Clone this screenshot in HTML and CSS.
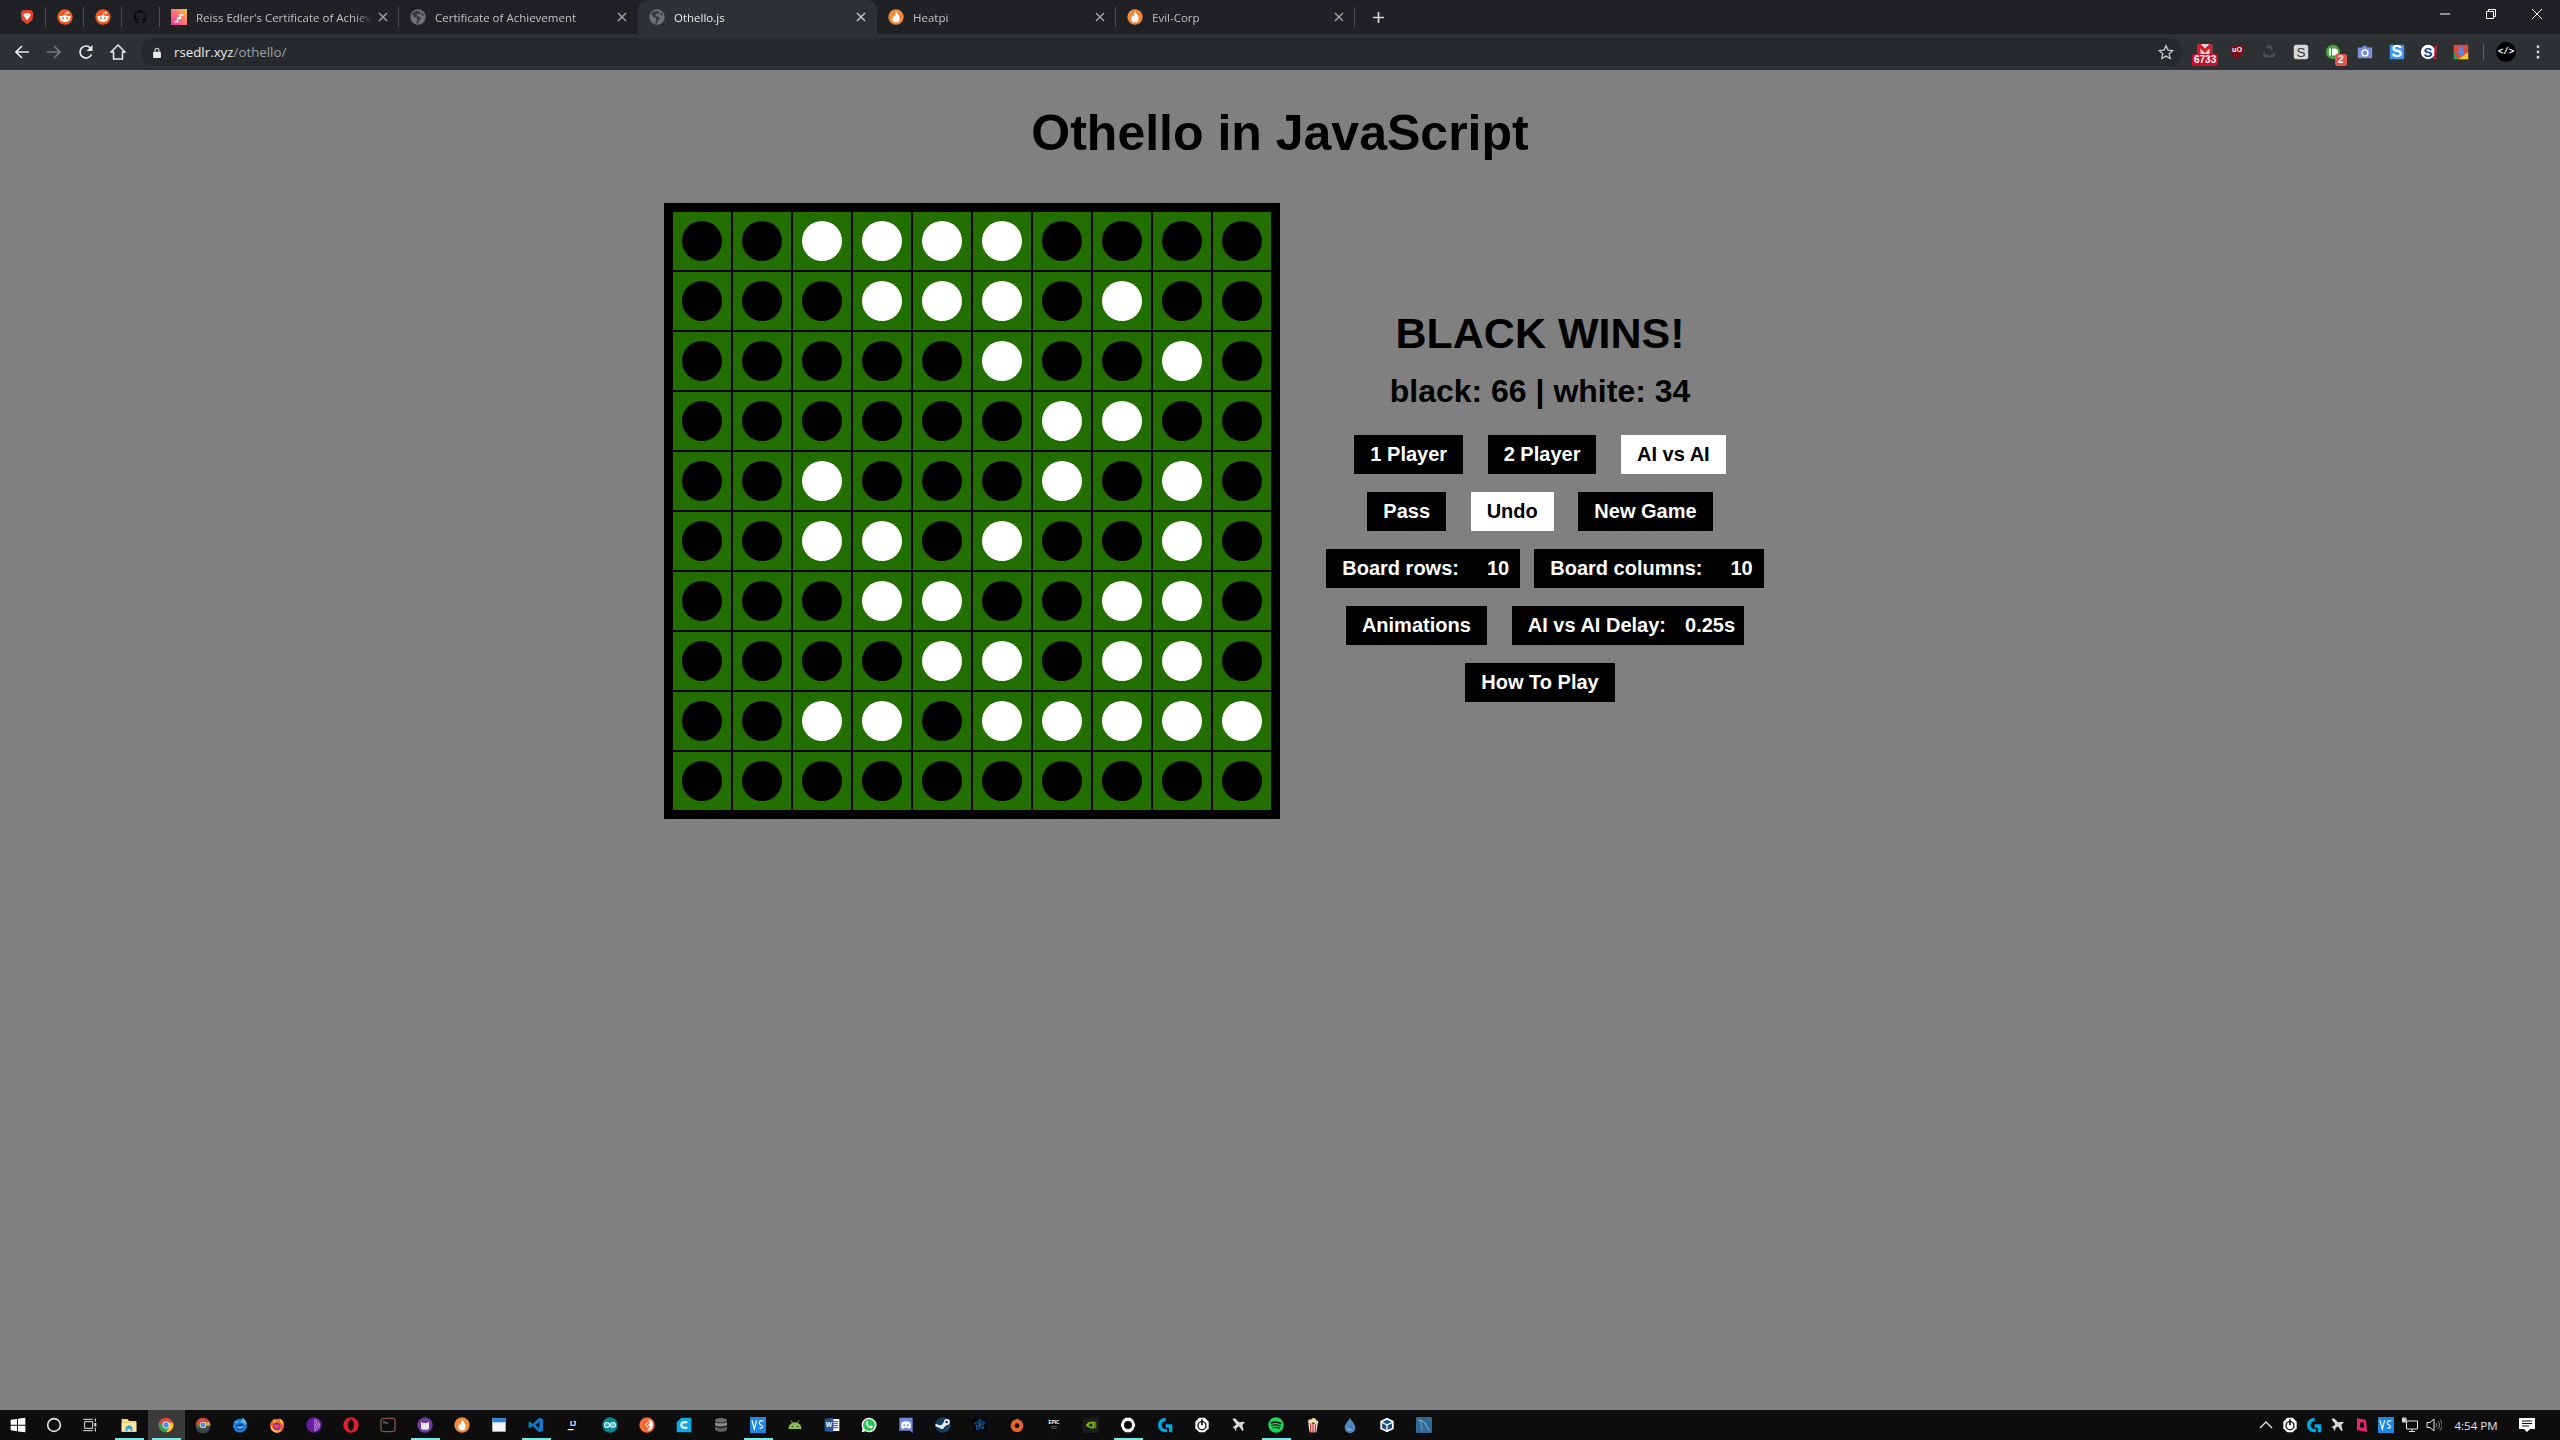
FILE: index.html
```html
<!DOCTYPE html>
<html lang="en">
<head>
<meta charset="utf-8">
<title>Othello.js</title>
<link rel="stylesheet" href="styles.css">
</head>
<body>
<svg class="defs" aria-hidden="true">
<symbol id="flame" viewBox="0 0 24 24"><circle cx="12" cy="12" r="11.5" fill="#f0893a"/><path d="M12.5 3.5c.5 3.5 5 6 5 11a5.5 5.5 0 0 1-11 0c0-2.500 1.300-4 2.300-5.200.2 1.400.7 2.200 1.500 2.700.2-3 .6-5.700 2.200-8.500z" fill="#fff"/></symbol>
<symbol id="globe" viewBox="0 0 24 24"><circle cx="12" cy="12" r="11.500" fill="#6f7276"/><path d="M11 2.500 6 4 3 8l3 4 4 1 1 4-2 4 3 1 2-5 3-3-4-3-3-1 1-3 4 1 1-4zM18 5l3 4-2 2-2-3z" fill="#3a3d40"/></symbol>
<symbol id="reddit" viewBox="0 0 24 24"><circle cx="12" cy="12" r="11.500" fill="#f1571f"/><ellipse cx="12" cy="14.500" rx="7.500" ry="5" fill="#fff"/><circle cx="5" cy="12" r="1.800" fill="#fff"/><circle cx="19" cy="12" r="1.800" fill="#fff"/><circle cx="16.500" cy="5.500" r="1.500" fill="#fff"/><path d="M12 10l1-4.500 3.500.5" fill="none" stroke="#fff"/><circle cx="9" cy="13.500" r="1.400" fill="#f1571f"/><circle cx="15" cy="13.500" r="1.400" fill="#f1571f"/></symbol>
<symbol id="brave" viewBox="0 0 24 24"><path d="M6 1.500h12l3.500 4-1.500 11-8 6.500-8-6.500-1.500-11z" fill="#e8432c"/><path d="M8 7l4-1 4 1 1.500 2-2.500 4-3 4-3-4-2.500-4z" fill="#fff"/><path d="M10 10h1.200M12.800 10H14" stroke="#e8432c" stroke-width="1.200"/></symbol>
<symbol id="github" viewBox="0 0 24 24"><path d="M12 1a11 11 0 0 0-3.500 21.400v-3.600c-3 .6-3.700-1.400-3.700-1.400-.5-1.200-1.200-1.600-1.200-1.600-1-.7.1-.7.1-.7 1.100.1 1.700 1.100 1.700 1.100 1 1.700 2.600 1.200 3.200.9.100-.7.400-1.200.700-1.500-2.400-.3-5-1.200-5-5.400 0-1.200.4-2.200 1.100-2.900-.1-.3-.5-1.400.1-2.900 0 0 .9-.3 3 1.100a10 10 0 0 1 5.400 0c2.100-1.400 3-1.100 3-1.100.6 1.500.2 2.600.1 2.900.7.7 1.100 1.700 1.100 2.900 0 4.200-2.600 5.100-5 5.400.4.300.7 1 .7 2v3.900A11 11 0 0 0 12 1z" fill="#0a0a0a"/></symbol>
<symbol id="stairs" viewBox="0 0 24 24"><defs><linearGradient id="pk" x1="0" y1="1" x2="1" y2="0"><stop offset="0" stop-color="#f22bb0"/><stop offset="1" stop-color="#ffc23a"/></linearGradient></defs><rect width="24" height="24" fill="url(#pk)"/><path d="M5 19h5v-5h4V9h5" fill="none" stroke="#fff" stroke-width="2.200"/></symbol>
<symbol id="x" viewBox="0 0 10 10"><path d="M1 1l8 8M9 1l-8 8" stroke="currentColor" stroke-width="1.500" fill="none"/></symbol>
<symbol id="windows" viewBox="0 0 24 24"><path d="M1 4.200 10.500 3v8.500H1zM12 2.800 23 1v10.500H12zM1 13h9.500v8.500L1 20zM12 13h11v10l-11-1.400z" fill="#fff"/></symbol>
<symbol id="chrome" viewBox="0 0 24 24"><circle cx="12" cy="12" r="11" fill="#dd4b3e"/><path d="M12 23A11 11 0 0 0 22.500 8.500H12l3.500 5.500z" fill="#f7c52d"/><path d="M1.800 7.500A11 11 0 0 0 12 23l4.500-7.500H8z" fill="#2f9f4d"/><circle cx="12" cy="12" r="5.200" fill="#fff"/><circle cx="12" cy="12" r="4" fill="#4a8bf0"/></symbol>
<symbol id="canary" viewBox="0 0 24 24"><circle cx="12" cy="12" r="11" fill="#d8483a"/><path d="M1 12h22v2a11 11 0 0 1-22 0z" fill="#3f4448"/><path d="M12 8h10.500l.5 5H16z" fill="#d7a928"/><path d="M3 7 8 15l-5 1z" fill="#3e8a4c"/><circle cx="12" cy="12" r="5" fill="#ddd"/><circle cx="12" cy="12" r="3.600" fill="#5c87c7"/></symbol>
<symbol id="ffdev" viewBox="0 0 24 24"><circle cx="12" cy="13" r="10.500" fill="#1e7fd8"/><path d="M3 6c2 2 3 3 5 3 2-3 6-3 8-2-1-2-1-4 0-6 3 2 6 5 6 11-4-3-9-5-19-6z" fill="#5cc1ef"/><circle cx="12" cy="14.500" r="5" fill="#0f4fb8"/><path d="M8 13c2 2 6 3 9 0-1 5-9 6-9 0z" fill="#bfe6fb"/></symbol>
<symbol id="firefox" viewBox="0 0 24 24"><circle cx="12" cy="13" r="10.500" fill="#f46a2a"/><path d="M22 12a10 10 0 0 0-7-10c2 2 2 5 1 6 3 1 6 3 6 4zM3 18A10.500 10.500 0 0 0 20 20C14 22 7 20 3 13z" fill="#ffbd3a"/><circle cx="11.500" cy="14" r="5.500" fill="#6a2bb7"/><path d="M7 12c3-2 7-1 9 1-1 6-10 6-9-1z" fill="#f03f5f"/><path d="M7 3c1 2 2 3 4 3L7 9z" fill="#ffd43a"/></symbol>
<symbol id="tor" viewBox="0 0 24 24"><circle cx="12" cy="12" r="11.500" fill="#6a1ba3"/><g fill="none" stroke="#d9b5ef" stroke-width="1.400"><path d="M12 4a8 8 0 0 1 0 16"/><path d="M12 7a5 5 0 0 1 0 10"/><path d="M12 10a2 2 0 0 1 0 4"/></g></symbol>
<symbol id="opera" viewBox="0 0 24 24"><circle cx="12" cy="12" r="11.500" fill="#e0202c"/><ellipse cx="12" cy="12" rx="4.500" ry="8.500" fill="#111"/></symbol>
<symbol id="terminal" viewBox="0 0 24 24"><rect x="1.500" y="2" width="21" height="20" rx="2.500" fill="#0b0b12" stroke="#b8705a" stroke-width="1.400"/><path d="M5 6l2 1.500L5 9" stroke="#fff" stroke-width="1" fill="none"/><path d="M8 9h4" stroke="#fff"/></symbol>
<symbol id="cat" viewBox="0 0 24 24"><circle cx="12" cy="12" r="11.500" fill="#6a3e9e"/><path d="M6 7l3 2h6l3-2v9a3 3 0 0 1-3 3H9a3 3 0 0 1-3-3z" fill="#e9e4f2"/></symbol>
<symbol id="calendar" viewBox="0 0 24 24"><rect x="2" y="2" width="20" height="20" fill="#f3f5f7"/><rect x="2" y="2" width="20" height="6" fill="#1e7fe5"/></symbol>
<symbol id="vscode" viewBox="0 0 24 24"><path d="M17 1 22.500 3.500v17L17 23 7 13.500 2.800 17 1 16V8l1.800-1L7 10.500zM17 7l-6 5 6 5z" fill="#0f7ccc"/></symbol>
<symbol id="arduino" viewBox="0 0 24 24"><circle cx="12" cy="12" r="11.500" fill="#05888f"/><g fill="none" stroke="#dff" stroke-width="1.800"><circle cx="7.500" cy="12" r="3.600"/><circle cx="16.500" cy="12" r="3.600"/></g><path d="M6 12h3M15 12h3M16.500 10.500v3" stroke="#dff"/></symbol>
<symbol id="gitk" viewBox="0 0 24 24"><circle cx="12" cy="12" r="11.500" fill="#f4622d"/><circle cx="12" cy="12" r="9" fill="#fff"/><path d="M12 3a9 9 0 0 0 0 18l3-3-6-6 7-7z" fill="#f4622d"/><path d="M16 8l-4 4 4 4" fill="none" stroke="#f4622d" stroke-width="2"/></symbol>
<symbol id="cyanc" viewBox="0 0 24 24"><path d="M8 1h15v22H1V8z" fill="#0ea8e2"/><path d="M17 8h-5a4 4 0 0 0 0 8h5" fill="none" stroke="#fff" stroke-width="3"/></symbol>
<symbol id="db" viewBox="0 0 24 24"><g fill="#6d6f70"><ellipse cx="12" cy="5" rx="9" ry="3.500"/><path d="M3 7c2 3 16 3 18 0v5c-2 3-16 3-18 0z" fill="#8a8c8d"/><path d="M3 14c2 3 16 3 18 0v5c-2 4-16 4-18 0z" fill="#5d5f60"/></g></symbol>
<symbol id="vs" viewBox="0 0 24 24"><rect width="24" height="24" fill="#1e88e5"/><path d="M3 5l3.500 13L10 5M20 6c-6-2-8 4-4 5.500 4 1.500 4 6-2 5" fill="none" stroke="#fff" stroke-width="1.700"/></symbol>
<symbol id="android" viewBox="0 0 24 24"><path d="M2 18a10 10 0 0 1 20 0z" fill="#8bb84f"/><path d="M6 5l3 5M18 5l-3 5" stroke="#8bb84f" stroke-width="1.400"/><circle cx="8" cy="14" r="1" fill="#111"/><circle cx="16" cy="14" r="1" fill="#111"/></symbol>
<symbol id="whatsapp" viewBox="0 0 24 24"><path d="M12 1a11 11 0 0 0-9.500 16.500L1 23l5.700-1.500A11 11 0 1 0 12 1z" fill="#fff"/><circle cx="12" cy="12" r="9" fill="#29c453"/><path d="M8.500 6.500c-2 1.500-1.500 4 .5 6.500 2.500 3 5.500 4.500 7.500 3.500 1.200-.6 1.500-2 1-2.500l-2.500-1.200-1 1.200c-1.500-.3-3.500-2.200-4.200-3.800l1-1.200-1-2.500z" fill="#fff"/></symbol>
<symbol id="discord" viewBox="0 0 24 24"><path d="M2 1h20v23l-4-3.500H2z" fill="#7289da"/><path d="M6 8c4-2 8-2 12 0 1.500 3 1.500 6 1 8-1 1-2.500 1.500-3.500 1.500l-1-1.500h-5L8.500 17.500C7.500 17.500 6 17 5 16c-.5-2-.5-5 1-8z" fill="#fff"/><circle cx="9.500" cy="12.500" r="1.500" fill="#7289da"/><circle cx="14.500" cy="12.500" r="1.500" fill="#7289da"/></symbol>
<symbol id="steam" viewBox="0 0 24 24"><circle cx="12" cy="12" r="11.500" fill="#133f63"/><path d="M.8 14l7 3a3.500 3.500 0 0 0 6-2l4-3a4.500 4.500 0 1 0-4.500-4.500L10 12a3.500 3.500 0 0 0-2.500.5L.6 10z" fill="#eee"/><circle cx="17.500" cy="7.500" r="2" fill="#133f63"/></symbol>
<symbol id="battle" viewBox="0 0 24 24"><rect x="1" y="1" width="22" height="22" rx="5" fill="#02060f"/><path d="M12 3c1 3 2 4 7 5-3 3-3 5-2 9-3-1-6-1-10 2 1-4 0-7-3-10 4 0 6-2 8-6zM9 9l7 6M7 15l9-7M12 6l-1 11" fill="none" stroke="#0b8fe0" stroke-width="1.200"/></symbol>
<symbol id="origin" viewBox="0 0 24 24"><circle cx="12" cy="13" r="9.500" fill="#e8632a"/><path d="M14 1l-1 4h-3z" fill="#e8632a"/><path d="M11 23l1-4h3z" fill="#e8632a"/><circle cx="12" cy="13" r="3.500" fill="#0d0d0d"/></symbol>
<symbol id="nvidia" viewBox="0 0 24 24"><rect width="24" height="24" fill="#1a1a1a"/><path d="M4 12c3-5 9-6 13-5v10c-5 1-10-1-13-5zM8 12c2-2 5-3 6-2v5c-2 0-4-1-6-3z" fill="#76b900" fill-rule="evenodd"/><path d="M17 7h3v10h-3" fill="#5a8a08"/></symbol>
<symbol id="ring" viewBox="0 0 24 24"><path d="M8 1h8l4 4 3 7-3 7-4 4H8l-4-4-3-7 3-7z" fill="#fff"/><circle cx="12" cy="12" r="6" fill="#0d0d0d"/></symbol>
<symbol id="logi" viewBox="0 0 24 24"><path d="M13 1a11 11 0 0 0-1 22 11 11 0 0 0 3-.4v-5a6 6 0 1 1-2-11.600z" fill="#00a8e0"/><path d="M13 11h10v12h-5v-7h-5z" fill="#00a8e0"/></symbol>
<symbol id="power" viewBox="0 0 24 24"><path d="M8 1h8l6 6v10l-6 6H8l-6-6V7z" fill="#fff"/><circle cx="12" cy="13" r="6" fill="none" stroke="#0d0d0d" stroke-width="2"/><path d="M12 3.500v9" stroke="#0d0d0d" stroke-width="2.500"/></symbol>
<symbol id="plane" viewBox="0 0 24 24"><path d="M2 3l4-1 6 6 6-1 3 1-4 4 2 8-2 1-5-7-4 3v3l-1 1-2-4-3-2 3-1 3-3z" fill="#d8d8d8"/></symbol>
<symbol id="spotify" viewBox="0 0 24 24"><circle cx="12" cy="12" r="11.500" fill="#1ed760"/><g fill="none" stroke="#111" stroke-linecap="round"><path d="M5 8.500c5-1.400 10-1 14.500 1.300" stroke-width="2.400"/><path d="M6 12.500c4-1.100 8.500-.7 12 1.200" stroke-width="2"/><path d="M7 16c3.500-.8 7-.5 10 1" stroke-width="1.600"/></g></symbol>
<symbol id="popcorn" viewBox="0 0 24 24"><path d="M5 10h14l-2 13H7z" fill="#fff"/><path d="M8 10l1 13M12 10v13M16 10l-1 13" stroke="#d6312d" stroke-width="2"/><g fill="#f5e1b0"><circle cx="8" cy="7" r="3.500"/><circle cx="13" cy="5" r="3.500"/><circle cx="17" cy="8" r="3"/></g></symbol>
<symbol id="drop" viewBox="0 0 24 24"><path d="M12 1c3 6 8 9 8 15a8 8 0 0 1-16 0c0-6 5-9 8-15z" fill="#4f88b8"/><path d="M8 15c1 3 4 4 7 3-1 3-8 3-7-3z" fill="#9fc4dd"/></symbol>
<symbol id="cube" viewBox="0 0 24 24"><path d="M12 1l10 5v12l-10 5-10-5V6z" fill="#fff"/><path d="M12 4l7 3.500-7 3.500-7-3.500zM4.500 9.500l6.500 3v7l-6.500-3zM19.500 9.500l-6.500 3v7l6.500-3z" fill="#1c4f87"/></symbol>
<symbol id="mysql" viewBox="0 0 24 24"><rect width="24" height="24" rx="2" fill="#2f6b94"/><path d="M3 5c7-1 11 4 13 9 1 3 3 5 5 6" fill="none" stroke="#a9cadf" stroke-width="1.300"/><path d="M8 6c-1 4 0 10 2 14" fill="none" stroke="#a9cadf"/></symbol>
</svg>

<header class="chrome">
  <div class="tabstrip">
    <div class="pinned"><svg class="fav"><use href="#brave"/></svg></div>
    <div class="pinned"><svg class="fav"><use href="#reddit"/></svg></div>
    <div class="pinned"><svg class="fav"><use href="#reddit"/></svg></div>
    <div class="pinned"><svg class="fav"><use href="#github"/></svg></div>
    <div class="tab sep"><svg class="fav"><use href="#stairs"/></svg><span class="tab-title">Reiss Edler's Certificate of Achievement</span><svg class="close"><use href="#x"/></svg></div>
    <div class="tab"><svg class="fav"><use href="#globe"/></svg><span class="tab-title">Certificate of Achievement</span><svg class="close"><use href="#x"/></svg></div>
    <div class="tab active"><svg class="fav"><use href="#globe"/></svg><span class="tab-title">Othello.js</span><svg class="close"><use href="#x"/></svg></div>
    <div class="tab sep"><svg class="fav"><use href="#flame"/></svg><span class="tab-title">Heatpi</span><svg class="close"><use href="#x"/></svg></div>
    <div class="tab sep"><svg class="fav"><use href="#flame"/></svg><span class="tab-title">Evil-Corp</span><svg class="close"><use href="#x"/></svg></div>
    <div class="newtab"><svg viewBox="0 0 14 14"><path d="M7 1v12M1 7h12" stroke="#d6d8da" stroke-width="1.800"/></svg></div>
    <div class="winctl">
      <div class="winbtn"><svg viewBox="0 0 10 10"><path d="M0 5h10" stroke="#fff"/></svg></div>
      <div class="winbtn"><svg viewBox="0 0 10 10"><path d="M.5 2.500h7v7h-7zM2.500 2.500v-2h7v7h-2" fill="none" stroke="#fff"/></svg></div>
      <div class="winbtn"><svg viewBox="0 0 10 10"><path d="M0 0l10 10M10 0 0 10" stroke="#fff"/></svg></div>
    </div>
  </div>
  <div class="toolbar">
    <div class="navbtn"><svg viewBox="0 0 16 16"><path d="M15 8H2M8 2 2 8l6 6" fill="none" stroke="#e8eaed" stroke-width="1.700"/></svg></div>
    <div class="navbtn"><svg viewBox="0 0 16 16"><path d="M1 8h13M8 2l6 6-6 6" fill="none" stroke="#75787b" stroke-width="1.700"/></svg></div>
    <div class="navbtn"><svg viewBox="0 0 16 16"><path d="M13.500 10.500A6 6 0 1 1 12.500 4" fill="none" stroke="#e8eaed" stroke-width="1.700"/><path d="M14.500 1v6h-6z" fill="#e8eaed"/></svg></div>
    <div class="navbtn"><svg viewBox="0 0 16 16"><path d="M8 1 1 8h2.500v7h9V8H15z" fill="none" stroke="#e8eaed" stroke-width="1.500"/></svg></div>
    <div class="omnibox">
      <svg class="lock" viewBox="0 0 10 14"><path d="M2.500 6V4a2.500 2.500 0 0 1 5 0v2" fill="none" stroke="#e8eaed" stroke-width="1.300"/><rect y="6" width="10" height="8" rx="1" fill="#e8eaed"/></svg>
      <span class="url"><span class="host">rsedlr.xyz</span>/othello/</span>
      <svg class="star" viewBox="0 0 24 24"><path d="M12 2.500l3 6.600 7 .8-5.200 4.800 1.400 7L12 18.200 5.800 21.700l1.400-7L2 9.900l7-.8z" fill="none" stroke="#c4c6c9" stroke-width="2"/></svg>
    </div>
    <div class="ext"><svg viewBox="0 0 20 20" class="ext-ic ext-mail"><rect x="2" y="0" width="16" height="13" fill="#d8d8d8"/><path d="M2 0h3l5 5 5-5h3v13h-3V5l-5 5-5-5v8H2z" fill="#cf2027"/></svg><span class="badge badge-red">6733</span></div>
    <div class="ext"><svg viewBox="0 0 20 20" class="ext-ic"><path d="M3 2.500h14V12l-7 6-7-6z" fill="#7d1017"/><text x="10" y="10.500" class="svg-t ub-t">uO</text></svg></div>
    <div class="ext"><svg viewBox="0 0 20 20" class="ext-ic"><path d="M7 4l3-2 3 2 1.500 3-2 1L10 5 8.500 7.500M3 11l2-1 1 3h4v3H4zM17 11l-2-1-1.500 3H11v3h5z" fill="#4a4f57"/></svg></div>
    <div class="ext"><svg viewBox="0 0 20 20" class="ext-ic"><rect x="2" y="2" width="16" height="16" rx="3" fill="#d8d8d8"/><text x="10" y="15" class="svg-t s-t">S</text></svg></div>
    <div class="ext"><svg viewBox="0 0 20 20" class="ext-ic"><circle cx="10" cy="10" r="8" fill="#4c9e45"/><path d="M5.500 6h2v8h-2zM9 6h2.500a4 4 0 0 1 0 8H9z" fill="#fff"/></svg><span class="badge badge-orange">2</span></div>
    <div class="ext"><svg viewBox="0 0 20 20" class="ext-ic"><path d="M2 5h5l1-2h4v2h6v12H2z" fill="#7b8fd8"/><circle cx="10" cy="11" r="3.300" fill="none" stroke="#fff" stroke-width="1.500"/></svg></div>
    <div class="ext"><svg viewBox="0 0 20 20" class="ext-ic"><rect x="2" y="2" width="16" height="16" fill="#3d97f0"/><text x="10" y="15.500" class="svg-t sb-t">S</text></svg></div>
    <div class="ext"><svg viewBox="0 0 20 20" class="ext-ic"><circle cx="9" cy="10" r="8" fill="#fff"/><text x="9" y="15" class="svg-t sn-t">S</text><path d="M16.500 3l-1 10h2.500l1-10zM15 15h3v3h-3z" fill="#d51f26"/></svg></div>
    <div class="ext"><svg viewBox="0 0 20 20" class="ext-ic"><rect x="2" y="2" width="16" height="16" fill="#dd4b3e"/><path d="M2 9l5 9H2z" fill="#2f9f4d"/><path d="M18 10v8H7z" fill="#f7c52d"/><path d="M8 4h4v5h3l-5 6-5-6h3z" fill="#4a8bf0"/></svg></div>
    <div class="tool-sep"></div>
    <div class="ext"><span class="code-av">&lt;/&gt;</span></div>
    <div class="ext"><svg viewBox="0 0 4 16" class="dots"><circle cx="2" cy="2" r="1.600" fill="#d6d8da"/><circle cx="2" cy="8" r="1.600" fill="#d6d8da"/><circle cx="2" cy="14" r="1.600" fill="#d6d8da"/></svg></div>
  </div>
</header>

<main class="page">
  <h1 class="title">Othello in JavaScript</h1>
  <div class="game">
    <div class="board-col">
      <div class="board">
        <div class="cell"><i class="disc b"></i></div><div class="cell"><i class="disc b"></i></div><div class="cell"><i class="disc w"></i></div><div class="cell"><i class="disc w"></i></div><div class="cell"><i class="disc w"></i></div><div class="cell"><i class="disc w"></i></div><div class="cell"><i class="disc b"></i></div><div class="cell"><i class="disc b"></i></div><div class="cell"><i class="disc b"></i></div><div class="cell"><i class="disc b"></i></div>
        <div class="cell"><i class="disc b"></i></div><div class="cell"><i class="disc b"></i></div><div class="cell"><i class="disc b"></i></div><div class="cell"><i class="disc w"></i></div><div class="cell"><i class="disc w"></i></div><div class="cell"><i class="disc w"></i></div><div class="cell"><i class="disc b"></i></div><div class="cell"><i class="disc w"></i></div><div class="cell"><i class="disc b"></i></div><div class="cell"><i class="disc b"></i></div>
        <div class="cell"><i class="disc b"></i></div><div class="cell"><i class="disc b"></i></div><div class="cell"><i class="disc b"></i></div><div class="cell"><i class="disc b"></i></div><div class="cell"><i class="disc b"></i></div><div class="cell"><i class="disc w"></i></div><div class="cell"><i class="disc b"></i></div><div class="cell"><i class="disc b"></i></div><div class="cell"><i class="disc w"></i></div><div class="cell"><i class="disc b"></i></div>
        <div class="cell"><i class="disc b"></i></div><div class="cell"><i class="disc b"></i></div><div class="cell"><i class="disc b"></i></div><div class="cell"><i class="disc b"></i></div><div class="cell"><i class="disc b"></i></div><div class="cell"><i class="disc b"></i></div><div class="cell"><i class="disc w"></i></div><div class="cell"><i class="disc w"></i></div><div class="cell"><i class="disc b"></i></div><div class="cell"><i class="disc b"></i></div>
        <div class="cell"><i class="disc b"></i></div><div class="cell"><i class="disc b"></i></div><div class="cell"><i class="disc w"></i></div><div class="cell"><i class="disc b"></i></div><div class="cell"><i class="disc b"></i></div><div class="cell"><i class="disc b"></i></div><div class="cell"><i class="disc w"></i></div><div class="cell"><i class="disc b"></i></div><div class="cell"><i class="disc w"></i></div><div class="cell"><i class="disc b"></i></div>
        <div class="cell"><i class="disc b"></i></div><div class="cell"><i class="disc b"></i></div><div class="cell"><i class="disc w"></i></div><div class="cell"><i class="disc w"></i></div><div class="cell"><i class="disc b"></i></div><div class="cell"><i class="disc w"></i></div><div class="cell"><i class="disc b"></i></div><div class="cell"><i class="disc b"></i></div><div class="cell"><i class="disc w"></i></div><div class="cell"><i class="disc b"></i></div>
        <div class="cell"><i class="disc b"></i></div><div class="cell"><i class="disc b"></i></div><div class="cell"><i class="disc b"></i></div><div class="cell"><i class="disc w"></i></div><div class="cell"><i class="disc w"></i></div><div class="cell"><i class="disc b"></i></div><div class="cell"><i class="disc b"></i></div><div class="cell"><i class="disc w"></i></div><div class="cell"><i class="disc w"></i></div><div class="cell"><i class="disc b"></i></div>
        <div class="cell"><i class="disc b"></i></div><div class="cell"><i class="disc b"></i></div><div class="cell"><i class="disc b"></i></div><div class="cell"><i class="disc b"></i></div><div class="cell"><i class="disc w"></i></div><div class="cell"><i class="disc w"></i></div><div class="cell"><i class="disc b"></i></div><div class="cell"><i class="disc w"></i></div><div class="cell"><i class="disc w"></i></div><div class="cell"><i class="disc b"></i></div>
        <div class="cell"><i class="disc b"></i></div><div class="cell"><i class="disc b"></i></div><div class="cell"><i class="disc w"></i></div><div class="cell"><i class="disc w"></i></div><div class="cell"><i class="disc b"></i></div><div class="cell"><i class="disc w"></i></div><div class="cell"><i class="disc w"></i></div><div class="cell"><i class="disc w"></i></div><div class="cell"><i class="disc w"></i></div><div class="cell"><i class="disc w"></i></div>
        <div class="cell"><i class="disc b"></i></div><div class="cell"><i class="disc b"></i></div><div class="cell"><i class="disc b"></i></div><div class="cell"><i class="disc b"></i></div><div class="cell"><i class="disc b"></i></div><div class="cell"><i class="disc b"></i></div><div class="cell"><i class="disc b"></i></div><div class="cell"><i class="disc b"></i></div><div class="cell"><i class="disc b"></i></div><div class="cell"><i class="disc b"></i></div>
      </div>
    </div>
    <section class="panel">
      <h2 class="result">BLACK WINS!</h2>
      <p class="score">black: 66 | white: 34</p>
      <div class="controls">
        <div class="row"><span class="btn">1 Player</span><span class="btn">2 Player</span><span class="btn on">AI vs AI</span></div>
        <div class="row"><span class="btn">Pass</span><span class="btn on">Undo</span><span class="btn">New Game</span></div>
        <div class="row row-tight"><span class="btn btn-sel">Board rows:<span class="val">10</span></span><span class="btn btn-sel">Board columns:<span class="val">10</span></span></div>
        <div class="row row-shift"><span class="btn">Animations</span><span class="btn btn-sel2">AI vs AI Delay:<span class="val val-d">0.25s</span></span></div>
        <div class="row"><span class="btn">How To Play</span></div>
      </div>
    </section>
  </div>
</main>

<footer class="taskbar">
  <div class="tb-start">
    <span class="tb-sys"><svg class="ti"><use href="#windows"/></svg></span>
    <span class="tb-sys"><svg class="ti" viewBox="0 0 24 24"><circle cx="12" cy="12" r="9.500" fill="none" stroke="#e8e8e8" stroke-width="2.400"/></svg></span>
    <span class="tb-sys"><svg class="ti" viewBox="0 0 24 24"><path d="M4 7h12v10H4zM2 3.500h14M2 20.500h14M20 2v5M20 16v6" fill="none" stroke="#e8e8e8" stroke-width="1.500"/><rect x="18.500" y="9" width="3" height="5" fill="#e8e8e8"/></svg></span>
  </div>
  <div class="tb-pins">
    <span class="pin open"><svg class="ti" viewBox="0 0 24 24"><path d="M1 3h9l2 3h11v16H1z" fill="#f5d674"/><path d="M1 9h22v13H1z" fill="#fbe6a0"/><path d="M7 21v-6l5-3 5 3v6h-3v-3h-4v3z" fill="#3f9fd8"/></svg></span>
    <span class="pin open cur"><svg class="ti"><use href="#chrome"/></svg></span>
    <span class="pin"><svg class="ti"><use href="#canary"/></svg></span>
    <span class="pin"><svg class="ti"><use href="#ffdev"/></svg></span>
    <span class="pin"><svg class="ti"><use href="#firefox"/></svg></span>
    <span class="pin"><svg class="ti"><use href="#tor"/></svg></span>
    <span class="pin"><svg class="ti"><use href="#opera"/></svg></span>
    <span class="pin"><svg class="ti"><use href="#terminal"/></svg></span>
    <span class="pin open"><svg class="ti"><use href="#cat"/></svg></span>
    <span class="pin"><svg class="ti"><use href="#flame"/></svg></span>
    <span class="pin"><svg class="ti"><use href="#calendar"/></svg></span>
    <span class="pin open"><svg class="ti"><use href="#vscode"/></svg></span>
    <span class="pin"><svg class="ti" viewBox="0 0 24 24"><rect x="1" y="1" width="22" height="22" fill="#0b0b0b"/><text x="12" y="13" class="svg-t ij-t">IJ</text><rect x="4" y="18" width="9" height="1.800" fill="#fff"/></svg></span>
    <span class="pin"><svg class="ti"><use href="#arduino"/></svg></span>
    <span class="pin"><svg class="ti"><use href="#gitk"/></svg></span>
    <span class="pin"><svg class="ti"><use href="#cyanc"/></svg></span>
    <span class="pin"><svg class="ti"><use href="#db"/></svg></span>
    <span class="pin open"><svg class="ti"><use href="#vs"/></svg></span>
    <span class="pin"><svg class="ti"><use href="#android"/></svg></span>
    <span class="pin"><svg class="ti" viewBox="0 0 24 24"><rect x="9" y="3" width="14" height="18" fill="#fff"/><path d="M13 7h8M13 10h8M13 13h8M13 16h8" stroke="#2b579a" stroke-width="1.500"/><path d="M1 2.500 14 1v22L1 21.500z" fill="#2b579a"/><text x="7.500" y="15" class="svg-t w-t">W</text></svg></span>
    <span class="pin"><svg class="ti"><use href="#whatsapp"/></svg></span>
    <span class="pin"><svg class="ti"><use href="#discord"/></svg></span>
    <span class="pin"><svg class="ti"><use href="#steam"/></svg></span>
    <span class="pin"><svg class="ti"><use href="#battle"/></svg></span>
    <span class="pin"><svg class="ti"><use href="#origin"/></svg></span>
    <span class="pin"><svg class="ti" viewBox="0 0 24 24"><path d="M3 0h18v19l-9 5-9-5z" fill="#0a0a0a" stroke="#333" stroke-width=".5"/><text x="12" y="10" class="svg-t ep-t">EPIC</text><path d="M7 14h10M8 17h8" stroke="#888"/></svg></span>
    <span class="pin"><svg class="ti"><use href="#nvidia"/></svg></span>
    <span class="pin open"><svg class="ti"><use href="#ring"/></svg></span>
    <span class="pin"><svg class="ti"><use href="#logi"/></svg></span>
    <span class="pin"><svg class="ti"><use href="#power"/></svg></span>
    <span class="pin"><svg class="ti"><use href="#plane"/></svg></span>
    <span class="pin open"><svg class="ti"><use href="#spotify"/></svg></span>
    <span class="pin"><svg class="ti"><use href="#popcorn"/></svg></span>
    <span class="pin"><svg class="ti"><use href="#drop"/></svg></span>
    <span class="pin"><svg class="ti"><use href="#cube"/></svg></span>
    <span class="pin"><svg class="ti"><use href="#mysql"/></svg></span>
  </div>
  <div class="tray">
    <span class="tr"><svg class="tri" viewBox="0 0 16 16"><path d="M2 11l6-6 6 6" fill="none" stroke="#e8e8e8" stroke-width="1.300"/></svg></span>
    <span class="tr"><svg class="tri"><use href="#power"/></svg></span>
    <span class="tr"><svg class="tri"><use href="#logi"/></svg></span>
    <span class="tr"><svg class="tri"><use href="#plane"/></svg></span>
    <span class="tr"><svg class="tri" viewBox="0 0 16 16"><path d="M3 1l9 2 1 12-10-2z" fill="#e8246f"/><rect x="6" y="5.500" width="4" height="5" fill="#111"/></svg></span>
    <span class="tr"><svg class="tri"><use href="#vs"/></svg></span>
    <span class="tr"><svg class="tri" viewBox="0 0 16 16"><path d="M4.500 4h11v8h-11zM7 14.500h6M10 12v2.500M.5 1h3.500v4H.5z" fill="none" stroke="#e8e8e8"/><rect x="1" y="1.500" width="2.500" height="3" fill="#e8e8e8"/></svg></span>
    <span class="tr"><svg class="tri" viewBox="0 0 16 16"><path d="M1 5.500h3L8 2v12L4 10.500H1z" fill="none" stroke="#e8e8e8"/><path d="M10 6a3 3 0 0 1 0 4M12 4a6 6 0 0 1 0 8M14 2.500a8 8 0 0 1 0 11" fill="none" stroke="#8a8a8a"/></svg></span>
    <span class="clock">4:54 PM</span>
    <span class="notify"><svg viewBox="0 0 16 16"><path d="M0 1h16v11h-5l-3 3-3-3H0z" fill="#fff"/><path d="M3 4h10M3 6.500h10M3 9h7" stroke="#111"/></svg></span>
  </div>
</footer>
</body>
</html>
```

FILE: styles.css
```css
html, body { margin: 0; height: 100%; }
body {
  display: flex;
  flex-direction: column;
  height: 1440px;
  overflow: hidden;
  background: #808080;
  font-family: "Liberation Sans", Arial, sans-serif;
}
.defs { position: absolute; width: 0; height: 0; }
.svg-t { font-family: "Liberation Sans", Arial, sans-serif; font-weight: 700; text-anchor: middle; }
.ij-t { font-size: 11px; fill: #fff; }
.w-t { font-size: 10px; fill: #fff; }
.ep-t { font-size: 7px; fill: #fff; }
.ub-t { font-size: 8px; fill: #fff; }
.s-t { font-size: 15px; fill: #333; font-weight: 400; }
.sb-t { font-size: 18px; fill: #fff; }
.sn-t { font-size: 15px; fill: #123a8f; }

/* browser chrome */
.chrome { flex: none; font-family: "Open Sans", "Noto Sans", sans-serif; }
.tabstrip { display: flex; align-items: stretch; height: 34px; padding-left: 8px; background: #202124; }
.pinned { width: 38px; display: flex; align-items: center; justify-content: center; position: relative; }
.pinned::after, .sep::after {
  content: ""; position: absolute; right: 0; top: 7px; width: 1px; height: 20px; background: #4a4c50;
}
.fav { width: 16px; height: 16px; flex: none; }
.tab {
  position: relative; width: 239px; flex: none; display: flex; align-items: center;
  padding: 0 11px; box-sizing: border-box; color: #bdc1c6; font-size: 11.5px;
}
.tab-title {
  flex: 1; margin-left: 9px; white-space: nowrap; overflow: hidden;
  -webkit-mask-image: linear-gradient(to left, transparent 0, #000 16px);
  mask-image: linear-gradient(to left, transparent 0, #000 16px);
}
.close { width: 10px; height: 10px; flex: none; margin-left: 6px; color: #9aa0a6; }
.active { background: #2e3134; border-radius: 10px 10px 0 0; color: #e8eaed; }
.active .close { color: #c4c6c9; }
.newtab { width: 46px; display: flex; align-items: center; justify-content: center; }
.newtab svg { width: 13px; height: 13px; }
.winctl { margin-left: auto; display: flex; height: 28px; }
.winbtn { width: 46px; display: flex; align-items: center; justify-content: center; }
.winbtn svg { width: 10px; height: 10px; }
.toolbar { display: flex; align-items: center; height: 36px; padding: 0 6px; background: #2e3134; }
.navbtn { width: 32px; flex: none; display: flex; align-items: center; justify-content: center; }
.navbtn svg { width: 16px; height: 16px; }
.omnibox {
  flex: 1; height: 28px; margin: 0 7px; border-radius: 14px; background: #26292c;
  display: flex; align-items: center; padding: 0 8px 0 12px; color: #9aa0a6; font-size: 13.3px;
}
.lock { width: 8px; height: 11px; }
.url { margin-left: 13px; }
.host { color: #e8eaed; }
.star { width: 16px; height: 16px; margin-left: auto; }
.ext { position: relative; width: 32px; height: 18px; flex: none; display: flex; align-items: center; justify-content: center; }
.ext-ic { width: 18px; height: 18px; }
.ext-mail { margin-top: 2px; }
.badge {
  position: absolute; font: 700 10px/12px "Liberation Sans", sans-serif; color: #fff; border-radius: 2px;
}
.badge-red { left: 3px; top: 11px; background: #c8102e; padding: 0 2px; }
.badge-orange { left: 18px; top: 11px; background: #e3574a; padding: 0 3px; }
.tool-sep { width: 1px; height: 16px; margin: 0 6px; background: #5b5e62; flex: none; }
.code-av {
  width: 20px; height: 20px; border-radius: 50%; background: #000; color: #fff; flex: none;
  display: flex; align-items: center; justify-content: center; font: 700 9px "Liberation Mono", monospace;
}
.dots { width: 4px; height: 14px; }

/* page */
.page { flex: 1; min-height: 0; }
.title { margin: 34px 0 41px; text-align: center; font-size: 50px; line-height: 58px; font-weight: 700; color: #000; }
.game { display: grid; grid-template-columns: 1fr 1fr; }
.board-col { display: flex; justify-content: flex-end; }
.board {
  display: grid; grid-template-columns: repeat(10, 58px); gap: 2px;
  border: 9px solid #000; background: #000;
}
.cell { height: 58px; padding: 9px; box-sizing: border-box; background: #236e00; }
.disc { display: block; width: 40px; height: 40px; border-radius: 50%; }
.disc.b { background: #000; }
.disc.w { background: #fff; }
.panel { width: 520px; padding-top: 106px; text-align: center; color: #000; }
.result { margin: 0; font-size: 43px; line-height: 48px; font-weight: 700; }
.score { margin: 16px 0 0; font-size: 32px; line-height: 37px; font-weight: 700; }
.controls { margin-top: 25px; display: flex; flex-direction: column; gap: 18px; }
.row { display: flex; justify-content: center; gap: 24.6px; }
.row-tight { gap: 14px; margin-left: 10px; }
.row-shift { margin-left: 10px; gap: 25px; }
.btn {
  height: 39px; display: flex; align-items: center; padding: 0 16px; box-sizing: border-box;
  background: #000; color: #fff; font-size: 20px; font-weight: 700; white-space: nowrap;
}
.btn.on { background: #fff; color: #000; }
.btn-sel { padding-right: 11px; }
.btn-sel2 { padding-right: 9px; }
.val { margin-left: 28px; }
.val-d { margin-left: 19px; }

/* taskbar */
.taskbar { flex: none; height: 30px; display: flex; align-items: stretch; background: #0d0d0d; }
.tb-start { display: flex; width: 110.5px; flex: none; }
.tb-sys { width: 36px; display: flex; align-items: center; justify-content: center; }
.ti { width: 16px; height: 16px; }
.tb-pins { display: flex; }
.pin { position: relative; width: 37px; display: flex; align-items: center; justify-content: center; }
.pin.open::after {
  content: ""; position: absolute; left: 4px; right: 4px; bottom: 0; height: 2px; background: #76e8e8;
}
.pin.cur { background: #3a3a3a; }
.tray { margin-left: auto; display: flex; align-items: center; padding-right: 25px; }
.tr { width: 24px; display: flex; align-items: center; justify-content: center; }
.tri { width: 16px; height: 16px; }
.clock { width: 60px; text-align: center; font: 11.5px "Open Sans", "Noto Sans", sans-serif; color: #e4e4e4; white-space: nowrap; }
.notify { width: 16px; height: 16px; margin-left: 13px; }
.notify svg { display: block; width: 16px; height: 16px; }
```
